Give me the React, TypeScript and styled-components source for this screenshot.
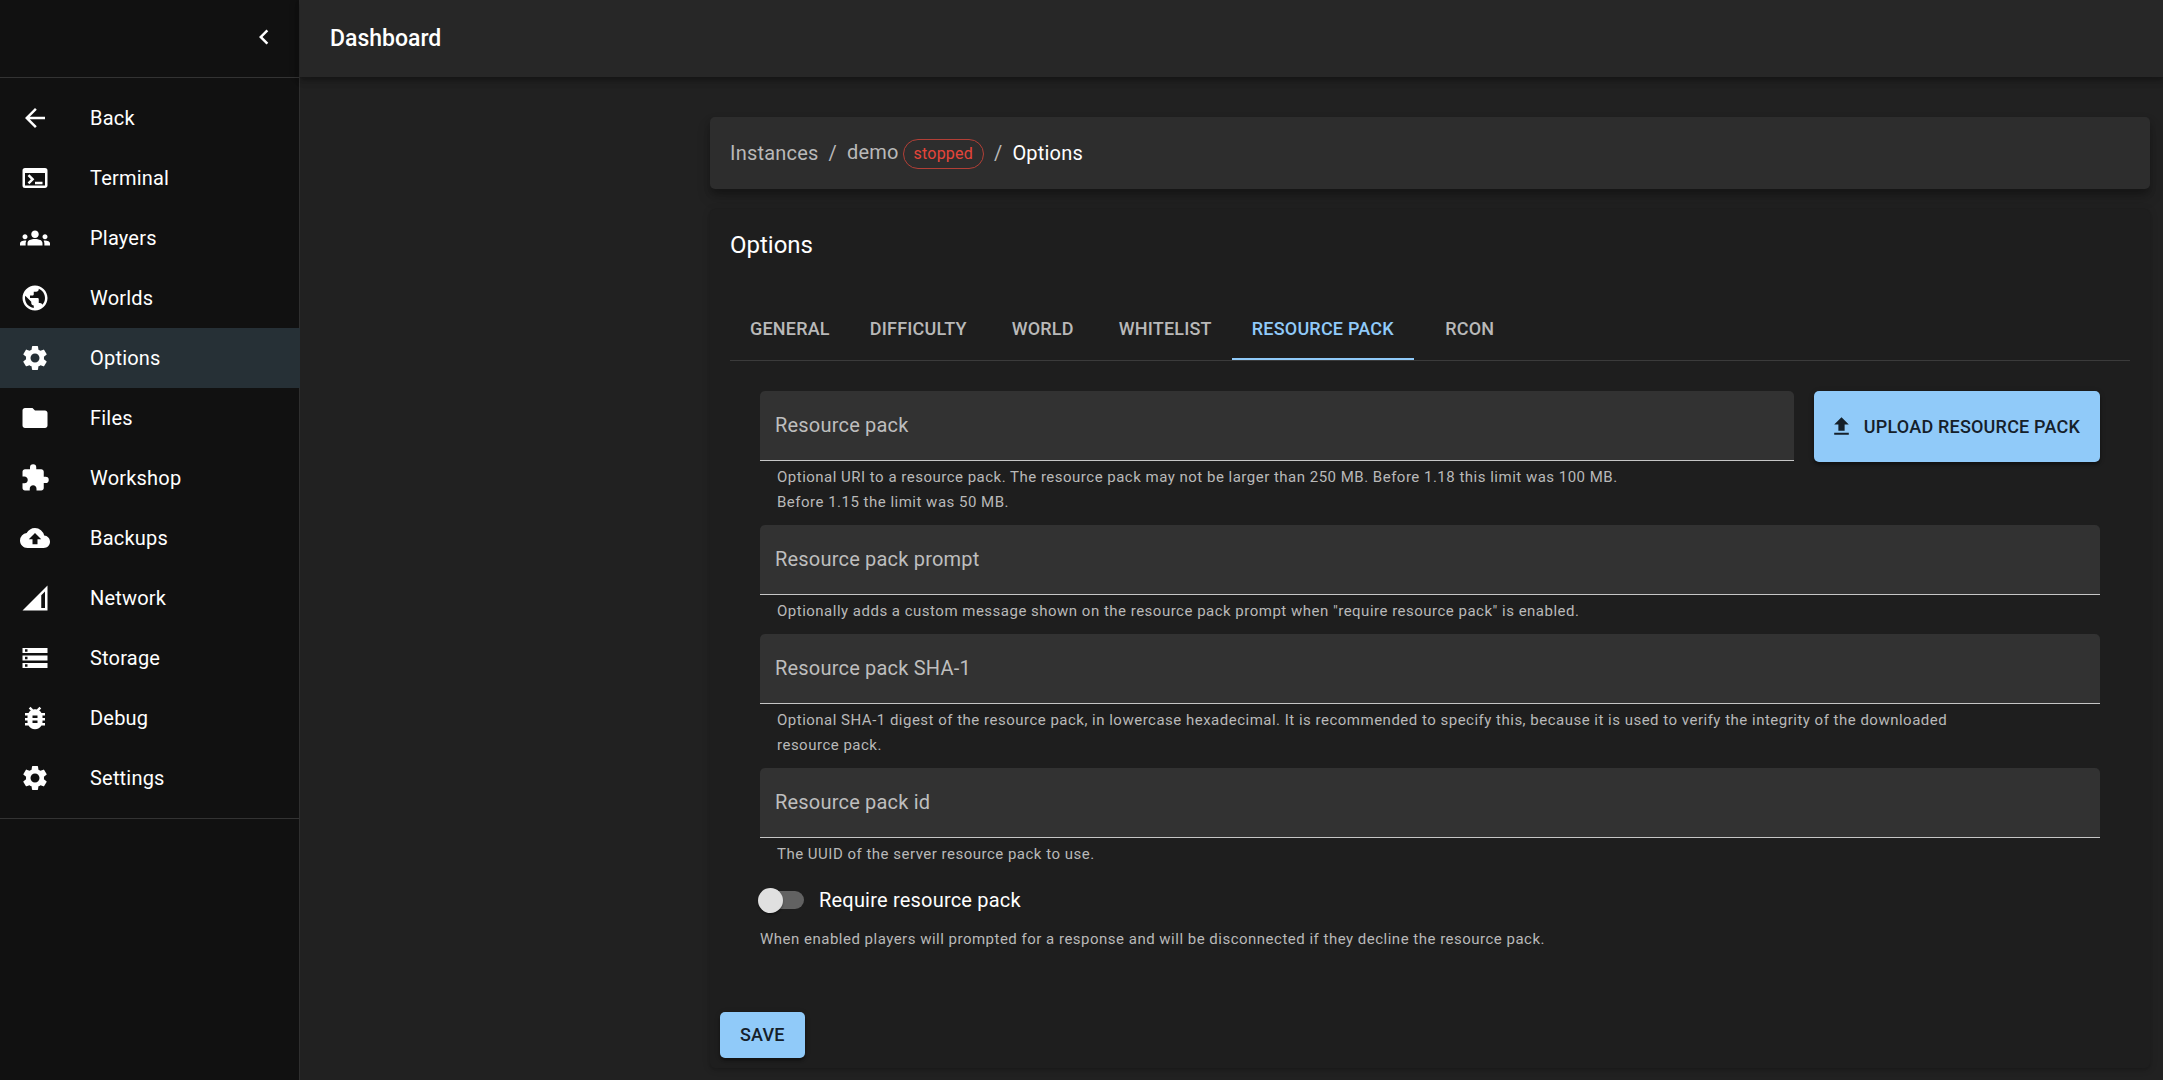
import React, { useState } from 'react';
import styled, { createGlobalStyle } from 'styled-components';
import {
  MdArrowBack,
  MdBackup,
  MdBugReport,
  MdChevronLeft,
  MdExtension,
  MdFolder,
  MdGroups,
  MdNetworkCell,
  MdPublic,
  MdSettings,
  MdStorage,
  MdTerminal,
  MdUpload,
} from 'react-icons/md';

const GlobalStyle = createGlobalStyle`
  *, *::before, *::after { box-sizing: border-box; }
  body {
    margin: 0;
    background: #212121;
    color: #fff;
    font-family: Roboto, "Liberation Sans", sans-serif;
    font-size: 20px;
    line-height: 30px;
    letter-spacing: 0.01em;
  }
  button, input { font: inherit; letter-spacing: inherit; }
`;

const Shell = styled.div`
  display: flex;
  min-height: 100vh;
`;

const Sidebar = styled.aside`
  flex: 0 0 300px;
  background: #111;
  border-right: 1px solid #2f2f2f;
`;

const SidebarHeader = styled.div`
  display: flex;
  align-items: center;
  justify-content: flex-end;
  height: 78px;
  padding: 0 10px 4px;
  border-bottom: 1px solid #333;
`;

const IconButton = styled.button`
  display: flex;
  padding: 10px;
  border: 0;
  border-radius: 50%;
  background: none;
  color: #fff;
  cursor: pointer;
`;

const NavList = styled.ul`
  margin: 0;
  padding: 10px 0;
  list-style: none;
  border-bottom: 1px solid #333;
`;

const NavLink = styled.a<{ $active: boolean }>`
  display: flex;
  align-items: center;
  gap: 40px;
  height: 60px;
  padding: 0 20px;
  margin-right: -1px;
  background: ${(p) => (p.$active ? '#263036' : 'transparent')};
  color: #fff;
  text-decoration: none;
`;

const Content = styled.div`
  flex: 1;
  min-width: 0;
  display: flex;
  flex-direction: column;
`;

const AppBar = styled.header`
  display: flex;
  align-items: center;
  height: 77px;
  padding: 0 30px;
  background: #272727;
  box-shadow: 0 2px 5px rgba(0, 0, 0, 0.2), 0 5px 6px rgba(0, 0, 0, 0.14), 0 1px 12px rgba(0, 0, 0, 0.12);
`;

const PageTitle = styled.h1`
  margin: 0;
  font-size: 23px;
  font-weight: 500;
  letter-spacing: normal;
`;

const Main = styled.main`
  align-self: flex-end;
  display: flex;
  flex-direction: column;
  gap: 20px;
  width: 100%;
  max-width: 1466px;
  padding: 40px 13px 12px;
`;

const Trail = styled.nav`
  padding: 20px;
  border-radius: 5px;
  background: #2d2d2d;
  box-shadow: 0 5px 6px rgba(0, 0, 0, 0.2), 0 8px 14px rgba(0, 0, 0, 0.2);

  ol {
    display: flex;
    align-items: center;
    gap: 10px;
    height: 32px;
    margin: 0;
    padding: 0;
    list-style: none;
    color: #b9b9b9;
  }
  li {
    display: flex;
    align-items: baseline;
    gap: 4px;
  }
  a {
    color: inherit;
    text-decoration: none;
  }
  [aria-current] {
    color: #fff;
  }
`;

const StatusChip = styled.span`
  padding: 0 10px;
  border: 1px solid #b23f36;
  border-radius: 15px;
  color: #e5453a;
  font-size: 16px;
  line-height: 28px;
`;

const Panel = styled.section`
  padding: 20px 20px 10px;
  border-radius: 5px;
  background: #1e1e1e;
  box-shadow: 0 2px 3px rgba(0, 0, 0, 0.14), 0 1px 8px rgba(0, 0, 0, 0.12);
`;

const PanelTitle = styled.h2`
  margin: 0 0 39px;
  font-size: 24px;
  font-weight: 400;
  line-height: 32px;
  letter-spacing: normal;
`;

const TabList = styled.div`
  display: flex;
  border-bottom: 1px solid #3b3b3b;
`;

const Tab = styled.button<{ $active: boolean }>`
  min-width: 112px;
  height: 60px;
  padding: 0 20px;
  border: 0;
  border-bottom: 2px solid ${(p) => (p.$active ? '#90caf9' : 'transparent')};
  background: none;
  color: ${(p) => (p.$active ? '#90caf9' : '#b9b9b9')};
  font-size: 18px;
  font-weight: 500;
  text-transform: uppercase;
  cursor: pointer;
`;

const Fields = styled.div`
  display: flex;
  flex-direction: column;
  gap: 10px;
  padding: 30px;
`;

const FieldRow = styled.div`
  display: flex;
  align-items: flex-start;
  gap: 20px;
`;

const Field = styled.div`
  flex: 1;
  min-width: 0;
`;

const Box = styled.div`
  display: grid;
  height: 70px;
  border-bottom: 1px solid #c6c6c6;
  border-radius: 5px 5px 0 0;
  background: #323232;

  & > * {
    grid-area: 1 / 1;
  }
`;

const FieldLabel = styled.label`
  align-self: center;
  padding: 0 15px 2px;
  color: #bebebe;
  pointer-events: none;
`;

const FieldInput = styled.input`
  width: 100%;
  padding: 0 15px;
  border: 0;
  outline: 0;
  background: none;
  color: #fff;

  &:focus {
    box-shadow: inset 0 -2px #90caf9;
  }
`;

const Hint = styled.p<{ $flush?: boolean }>`
  margin: ${(p) => (p.$flush ? '4px 0 0' : '4px 140px 0 17px')};
  color: #b9b9b9;
  font-size: 15px;
  line-height: 25px;
  letter-spacing: 0.033em;
`;

const ContainedButton = styled.button<{ $tall?: boolean }>`
  display: flex;
  align-items: center;
  gap: 10px;
  height: ${(p) => (p.$tall ? 71 : 46)}px;
  padding: 0 20px 0 ${(p) => (p.$tall ? 15 : 20)}px;
  border: 0;
  border-radius: 5px;
  background: #90caf9;
  color: #15202a;
  font-size: 18px;
  font-weight: 500;
  text-transform: uppercase;
  white-space: nowrap;
  cursor: pointer;
  box-shadow: 0 3px 2px rgba(0, 0, 0, 0.2), 0 2px 3px rgba(0, 0, 0, 0.14), 0 1px 6px rgba(0, 0, 0, 0.12);
`;

const SwitchLabel = styled.label`
  display: flex;
  align-items: center;
  gap: 15px;
  height: 46px;
  margin-left: -2px;
  cursor: pointer;
`;

const Switch = styled.input`
  appearance: none;
  display: grid;
  align-items: center;
  width: 46px;
  height: 26px;
  margin: 0;

  &::before,
  &::after {
    content: '';
    grid-area: 1 / 1;
  }
  &::before {
    height: 18px;
    margin-left: 3px;
    border-radius: 9px;
    background: #626262;
  }
  &::after {
    width: 25px;
    height: 25px;
    border-radius: 50%;
    background: #e0e0e0;
    box-shadow: 0 2px 2px rgba(0, 0, 0, 0.3);
  }
  &:checked::before {
    background: #567793;
  }
  &:checked::after {
    justify-self: end;
    background: #90caf9;
  }
`;

const Actions = styled.div`
  margin: 30px 0 0 -10px;
`;

const navItems = [
  { label: 'Back', Icon: MdArrowBack },
  { label: 'Terminal', Icon: MdTerminal },
  { label: 'Players', Icon: MdGroups },
  { label: 'Worlds', Icon: MdPublic },
  { label: 'Options', Icon: MdSettings },
  { label: 'Files', Icon: MdFolder },
  { label: 'Workshop', Icon: MdExtension },
  { label: 'Backups', Icon: MdBackup },
  { label: 'Network', Icon: MdNetworkCell },
  { label: 'Storage', Icon: MdStorage },
  { label: 'Debug', Icon: MdBugReport },
  { label: 'Settings', Icon: MdSettings },
];

const tabs = ['General', 'Difficulty', 'World', 'Whitelist', 'Resource pack', 'RCON'];

interface TextFieldProps {
  id: string;
  label: string;
  hint: string;
}

function TextField({ id, label, hint }: TextFieldProps) {
  const [value, setValue] = useState('');
  return (
    <Field>
      <Box>
        <FieldInput
          id={id}
          type="text"
          value={value}
          onChange={(e) => setValue(e.target.value)}
          aria-describedby={`${id}-hint`}
        />
        <FieldLabel htmlFor={id} hidden={value !== ''}>
          {label}
        </FieldLabel>
      </Box>
      <Hint id={`${id}-hint`}>{hint}</Hint>
    </Field>
  );
}

export default function App() {
  const [tab, setTab] = useState('Resource pack');

  return (
    <Shell>
      <GlobalStyle />
      <Sidebar>
        <SidebarHeader>
          <IconButton type="button" aria-label="Collapse menu">
            <MdChevronLeft size={30} />
          </IconButton>
        </SidebarHeader>
        <NavList>
          {navItems.map(({ label, Icon }) => (
            <li key={label}>
              <NavLink href="#" $active={label === 'Options'}>
                <Icon size={30} />
                {label}
              </NavLink>
            </li>
          ))}
        </NavList>
      </Sidebar>
      <Content>
        <AppBar>
          <PageTitle>Dashboard</PageTitle>
        </AppBar>
        <Main>
          <Trail aria-label="Breadcrumb">
            <ol>
              <li>
                <a href="#">Instances</a>
              </li>
              <li aria-hidden="true">/</li>
              <li>
                <a href="#">demo</a>
                <StatusChip>stopped</StatusChip>
              </li>
              <li aria-hidden="true">/</li>
              <li aria-current="page">Options</li>
            </ol>
          </Trail>
          <Panel>
            <PanelTitle>Options</PanelTitle>
            <TabList role="tablist">
              {tabs.map((name) => (
                <Tab
                  key={name}
                  type="button"
                  role="tab"
                  aria-selected={name === tab}
                  $active={name === tab}
                  onClick={() => setTab(name)}
                >
                  {name}
                </Tab>
              ))}
            </TabList>
            <form onSubmit={(e) => e.preventDefault()}>
              <Fields>
                <FieldRow>
                  <TextField
                    id="resource-pack"
                    label="Resource pack"
                    hint="Optional URI to a resource pack. The resource pack may not be larger than 250 MB. Before 1.18 this limit was 100 MB. Before 1.15 the limit was 50 MB."
                  />
                  <ContainedButton type="button" $tall>
                    <MdUpload size={25} />
                    Upload resource pack
                  </ContainedButton>
                </FieldRow>
                <TextField
                  id="resource-pack-prompt"
                  label="Resource pack prompt"
                  hint={'Optionally adds a custom message shown on the resource pack prompt when "require resource pack" is enabled.'}
                />
                <TextField
                  id="resource-pack-sha1"
                  label="Resource pack SHA-1"
                  hint="Optional SHA-1 digest of the resource pack, in lowercase hexadecimal. It is recommended to specify this, because it is used to verify the integrity of the downloaded resource pack."
                />
                <TextField
                  id="resource-pack-id"
                  label="Resource pack id"
                  hint="The UUID of the server resource pack to use."
                />
                <div>
                  <SwitchLabel>
                    <Switch type="checkbox" role="switch" aria-describedby="require-hint" />
                    Require resource pack
                  </SwitchLabel>
                  <Hint id="require-hint" $flush>
                    When enabled players will prompted for a response and will be disconnected if they decline the resource pack.
                  </Hint>
                </div>
              </Fields>
              <Actions>
                <ContainedButton type="submit">Save</ContainedButton>
              </Actions>
            </form>
          </Panel>
        </Main>
      </Content>
    </Shell>
  );
}
